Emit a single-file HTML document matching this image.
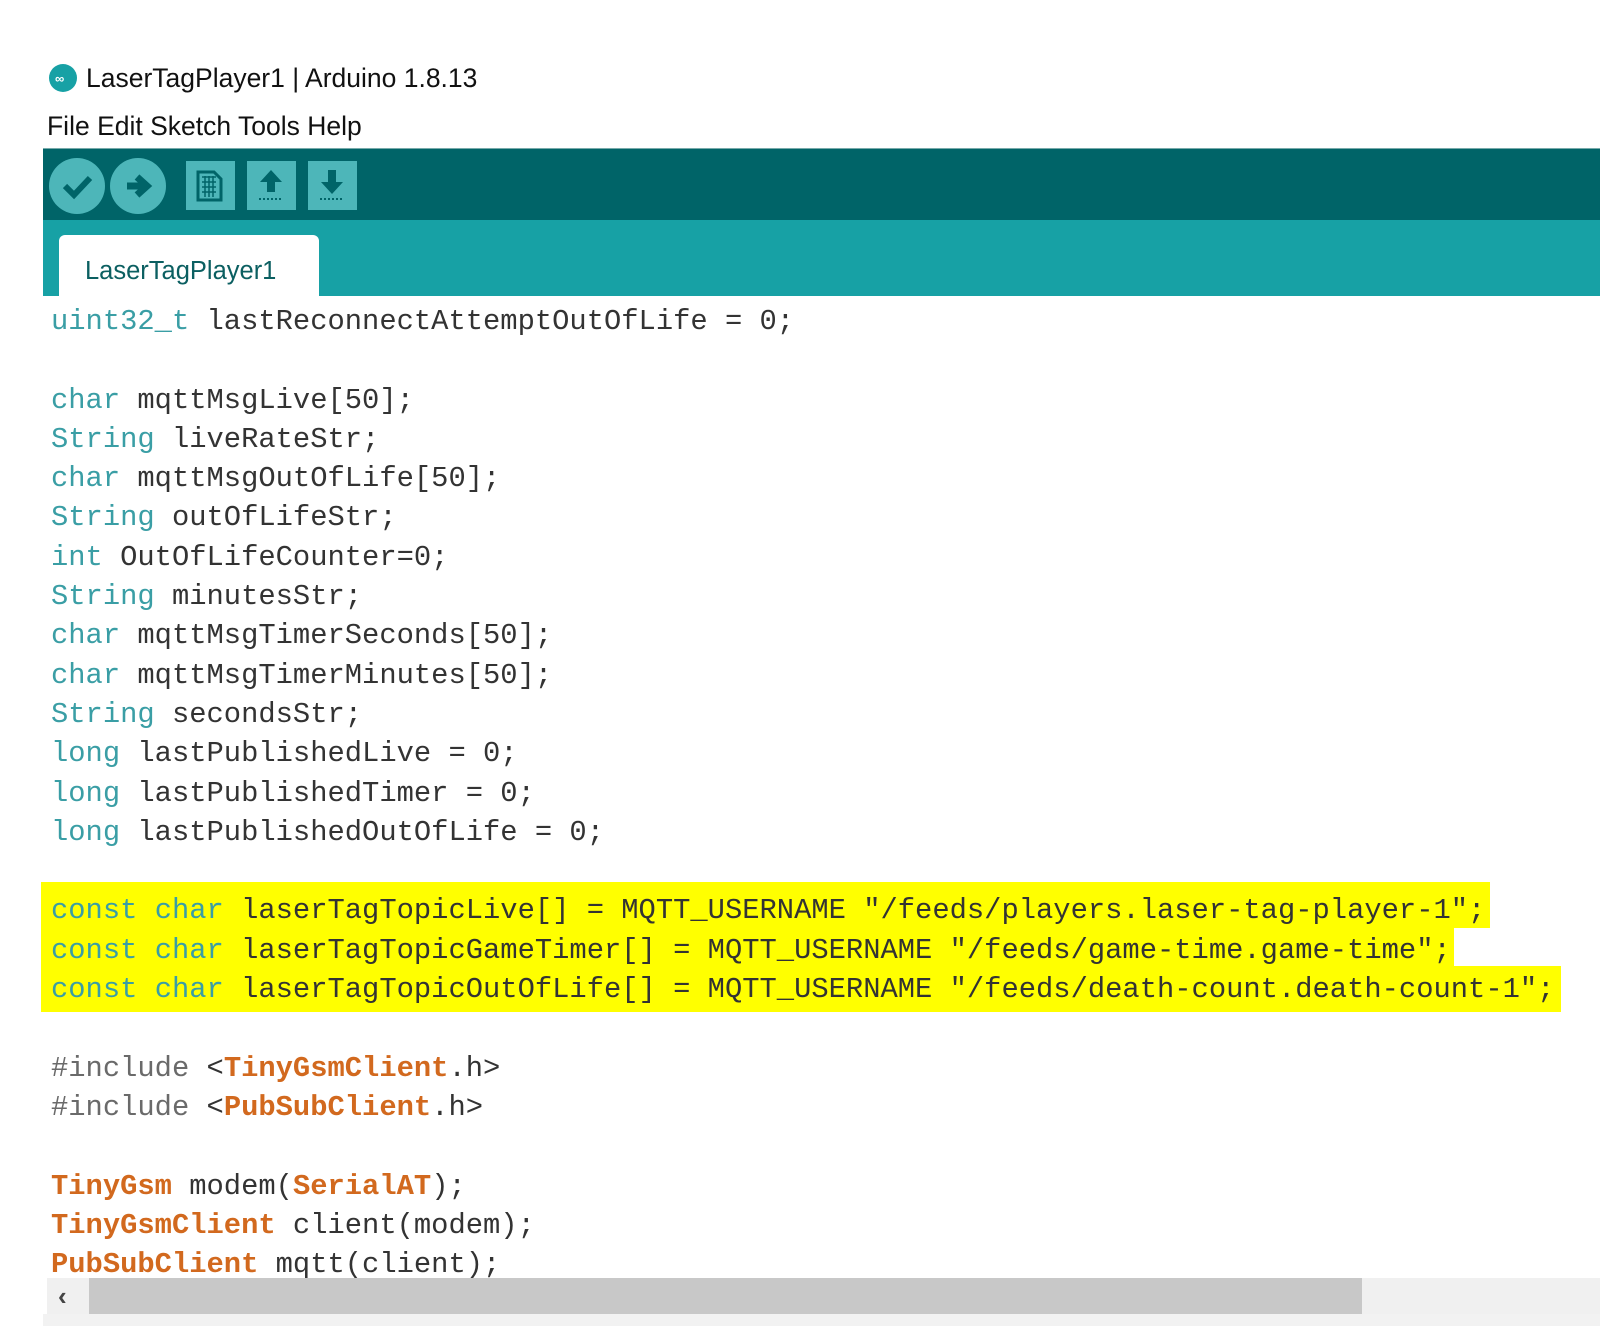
<!DOCTYPE html>
<html><head><meta charset="utf-8"><style>
body{margin:0;width:1600px;height:1326px;background:#fff;position:relative;overflow:hidden;font-family:"Liberation Sans",sans-serif}
.abs{position:absolute}
#title{left:86px;top:60px;font-size:26.5px;color:#111;line-height:36px}
#menu{left:47px;top:108px;font-size:26.5px;color:#111;line-height:36px}
#tb{left:43px;top:148px;width:1557px;height:72px;background:#006468;border-top:1px solid #7aa}
#tabbar{left:43px;top:220px;width:1557px;height:76px;background:#17a1a5}
#tab{left:59px;top:235px;width:260px;height:61px;background:#fff;border-radius:6px 6px 0 0;color:#0b5f61;font-size:25.5px;line-height:72px;text-indent:26px}
.circ{width:56px;height:56px;border-radius:50%;background:#4db6b9;top:158px}
.sq{width:49px;height:49px;background:#4db6b9;top:161px}
#code{left:51px;top:302px;font-family:"Liberation Mono",monospace;font-size:28.8px;line-height:39.3px;color:#333;white-space:pre}
.k{color:#3a9ea5}.o{color:#d2691e;font-weight:bold}.g{color:#6a6a6a}
#hl1{left:41px;top:882px;width:1449px;height:46px;background:#ffff00}
#hl2{left:41px;top:924px;width:1413px;height:46px;background:#ffff00}
#hl3{left:41px;top:966px;width:1520px;height:46px;background:#ffff00}
#sb{left:47px;top:1278px;width:1553px;height:36px;background:#f0f0f0}
#thumb{left:89px;top:1278px;width:1273px;height:36px;background:#c8c8c8}
#bot{left:43px;top:1314px;width:1557px;height:12px;background:#f2f2f2}
</style></head><body>
<div class="abs" style="left:49px;top:64px;width:28px;height:28px;border-radius:50%;background:#17a1a5"></div>
<div class="abs" style="left:55px;top:71px;font-size:13px;color:#fff;font-weight:bold">∞</div>
<div class="abs" id="title">LaserTagPlayer1 | Arduino 1.8.13</div>
<div class="abs" id="menu">File Edit Sketch Tools Help</div>
<div class="abs" id="tb"></div>
<div class="abs circ" style="left:49px"></div>
<div class="abs circ" style="left:110px"></div>
<div class="abs sq" style="left:186px"></div>
<div class="abs sq" style="left:247px"></div>
<div class="abs sq" style="left:308px"></div>
<svg class="abs" style="left:0;top:0" width="400" height="230">
<path d="M65 186 L74 195 L90 178" stroke="#006468" stroke-width="6" fill="none"/>
<path d="M127 186 H143 M137 177 L147 186 L137 195" stroke="#006468" stroke-width="7" fill="none"/>
<path d="M198 172 H214 L221 179 V200 H198 Z" fill="none" stroke="#006468" stroke-width="3"/>
<path d="M202 177 H216 M202 182 H216 M202 187 H216 M202 192 H216 M205 176 V197 M209 176 V197 M213 176 V197" stroke="#006468" stroke-width="1.5"/>
<path d="M271 170 L282 182 H275 V192 H267 V182 H260 Z" fill="#006468"/>
<path d="M259 199 H283" stroke="#006468" stroke-width="2" stroke-dasharray="2 2"/>
<path d="M332 194 L343 182 H336 V170 H328 V182 H321 Z" fill="#006468"/>
<path d="M320 199 H344" stroke="#006468" stroke-width="2" stroke-dasharray="2 2"/>
</svg>
<div class="abs" id="tabbar"></div>
<div class="abs" id="tab">LaserTagPlayer1</div>
<div class="abs" id="hl1"></div><div class="abs" id="hl2"></div><div class="abs" id="hl3"></div>
<div class="abs" id="code"><span class="k">uint32_t</span> lastReconnectAttemptOutOfLife = 0;

<span class="k">char</span> mqttMsgLive[50];
<span class="k">String</span> liveRateStr;
<span class="k">char</span> mqttMsgOutOfLife[50];
<span class="k">String</span> outOfLifeStr;
<span class="k">int</span> OutOfLifeCounter=0;
<span class="k">String</span> minutesStr;
<span class="k">char</span> mqttMsgTimerSeconds[50];
<span class="k">char</span> mqttMsgTimerMinutes[50];
<span class="k">String</span> secondsStr;
<span class="k">long</span> lastPublishedLive = 0;
<span class="k">long</span> lastPublishedTimer = 0;
<span class="k">long</span> lastPublishedOutOfLife = 0;

<span class="k">const</span> <span class="k">char</span> laserTagTopicLive[] = MQTT_USERNAME "/feeds/players.laser-tag-player-1";
<span class="k">const</span> <span class="k">char</span> laserTagTopicGameTimer[] = MQTT_USERNAME "/feeds/game-time.game-time";
<span class="k">const</span> <span class="k">char</span> laserTagTopicOutOfLife[] = MQTT_USERNAME "/feeds/death-count.death-count-1";

<span class="g">#include</span> &lt;<span class="o">TinyGsmClient</span>.h&gt;
<span class="g">#include</span> &lt;<span class="o">PubSubClient</span>.h&gt;

<span class="o">TinyGsm</span> modem(<span class="o">SerialAT</span>);
<span class="o">TinyGsmClient</span> client(modem);
<span class="o">PubSubClient</span> mqtt(client);</div>
<div class="abs" id="sb"></div>
<div class="abs" id="thumb"></div>
<div class="abs" style="left:58px;top:1278px;font-size:26px;line-height:36px;color:#444;font-weight:bold">‹</div>
<div class="abs" id="bot"></div>
</body></html>
